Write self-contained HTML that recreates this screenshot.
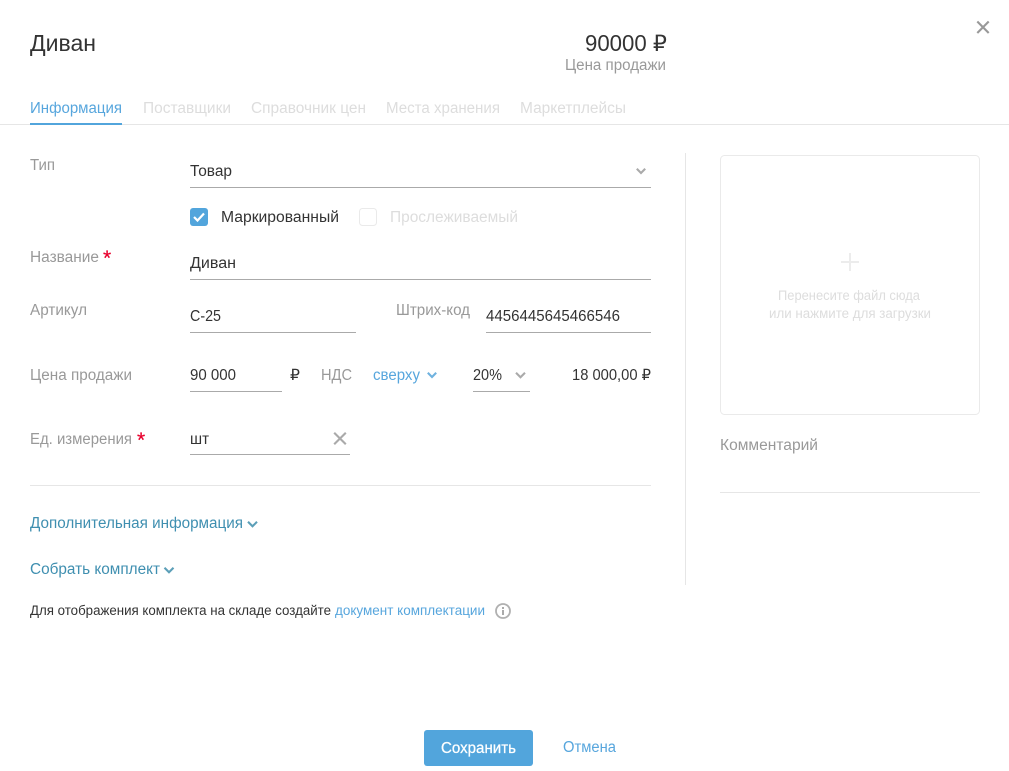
<!DOCTYPE html>
<html lang="ru"><head><meta charset="utf-8"><title>Диван</title>
<style>
html,body{margin:0;padding:0;background:#fff;width:1009px;height:771px;overflow:hidden}
svg{display:block}
text{font-family:"Liberation Sans",sans-serif;font-size:15.5px;fill:#333;white-space:pre}
.g{fill:#999}.d{fill:#ddd}.b{fill:#57a6dd}.t{fill:#3f8fb0}
.c{fill:none;stroke-linecap:butt;stroke-linejoin:miter}
.a{font-size:21px;fill:#e8002d;stroke:#e8002d;stroke-width:.2px}
.s{font-size:13.4px}
.h{font-size:22.7px}
</style></head><body>
<svg width="1009" height="771" viewBox="0 0 1009 771" xmlns="http://www.w3.org/2000/svg">
<rect width="1009" height="771" fill="#fff"/>
<text x="30" y="51" class="h" textLength="66" lengthAdjust="spacingAndGlyphs">Диван</text>
<text x="585" y="51" class="h" textLength="82" lengthAdjust="spacingAndGlyphs">90000 ₽</text>
<text x="565" y="70" class="g" textLength="101" lengthAdjust="spacingAndGlyphs">Цена продажи</text>
<path d="M977.300 21.500L988.700 33M988.700 21.500L977.300 33" stroke="#999" stroke-width="2.100" class="c"/>

<text x="30" y="113" class="b" textLength="92" lengthAdjust="spacingAndGlyphs">Информация</text>
<text x="143" y="113" class="d" textLength="88" lengthAdjust="spacingAndGlyphs">Поставщики</text>
<text x="251" y="113" class="d" textLength="115" lengthAdjust="spacingAndGlyphs">Справочник цен</text>
<text x="386" y="113" class="d" textLength="114" lengthAdjust="spacingAndGlyphs">Места хранения</text>
<text x="520" y="113" class="d" textLength="106" lengthAdjust="spacingAndGlyphs">Маркетплейсы</text>
<rect x="0" y="124" width="1009" height="1" fill="#e6e6e6"/>
<rect x="30" y="123" width="92" height="2" fill="#52a5dc"/>

<text x="30" y="170" class="g" textLength="25" lengthAdjust="spacingAndGlyphs">Тип</text>
<text x="190" y="176" textLength="42" lengthAdjust="spacingAndGlyphs">Товар</text>
<path d="M636.800 168.800l4.200 4.200 4.200-4.200" stroke="#aaa" stroke-width="2.100" class="c"/>
<rect x="190" y="187" width="461" height="1" fill="#aaa"/>

<rect x="190" y="208" width="18" height="18" rx="3" fill="#52a5dc"/>
<path d="M194 217l3.500 3.500 6.500-7" stroke="#fff" stroke-width="2.200" class="c"/>
<text x="221" y="222" textLength="118" lengthAdjust="spacingAndGlyphs">Маркированный</text>
<rect x="359.500" y="208.500" width="17" height="17" rx="3" fill="#fff" stroke="#eaeaea"/>
<text x="390" y="222" class="d" textLength="128" lengthAdjust="spacingAndGlyphs">Прослеживаемый</text>

<text x="30" y="262" class="g" textLength="69" lengthAdjust="spacingAndGlyphs">Название</text>
<text x="103" y="265" class="a">*</text>
<text x="190" y="268" textLength="46" lengthAdjust="spacingAndGlyphs">Диван</text>
<rect x="190" y="279" width="461" height="1" fill="#aaa"/>

<text x="30" y="315" class="g" textLength="57" lengthAdjust="spacingAndGlyphs">Артикул</text>
<text x="190" y="321" textLength="31" lengthAdjust="spacingAndGlyphs">С-25</text>
<rect x="190" y="332" width="166" height="1" fill="#aaa"/>
<text x="396" y="315" class="g" textLength="74" lengthAdjust="spacingAndGlyphs">Штрих-код</text>
<text x="486" y="321" textLength="134" lengthAdjust="spacingAndGlyphs">4456445645466546</text>
<rect x="486" y="332" width="165" height="1" fill="#aaa"/>

<text x="30" y="380" class="g" textLength="102" lengthAdjust="spacingAndGlyphs">Цена продажи</text>
<text x="190" y="380" textLength="46" lengthAdjust="spacingAndGlyphs">90 000</text>
<rect x="190" y="391" width="92" height="1" fill="#aaa"/>
<text x="290" y="380" textLength="10" lengthAdjust="spacingAndGlyphs">₽</text>
<text x="321" y="380" class="g" textLength="31" lengthAdjust="spacingAndGlyphs">НДС</text>
<text x="373" y="380" class="b" textLength="47" lengthAdjust="spacingAndGlyphs">сверху</text>
<path d="M427.800 372.800l4.200 4.200 4.200-4.200" stroke="#6fb2df" stroke-width="2.100" class="c"/>
<text x="473" y="380" textLength="29" lengthAdjust="spacingAndGlyphs">20%</text>
<path d="M516 372.800l4.500 4.500 4.500-4.500" stroke="#aaa" stroke-width="2.100" class="c"/>
<rect x="473" y="391" width="57" height="1" fill="#aaa"/>
<text x="572" y="380" textLength="79" lengthAdjust="spacingAndGlyphs">18 000,00 ₽</text>

<text x="30" y="444" class="g" textLength="102" lengthAdjust="spacingAndGlyphs">Ед. измерения</text>
<text x="137" y="447" class="a">*</text>
<text x="190" y="444" textLength="19" lengthAdjust="spacingAndGlyphs">шт</text>
<path d="M334.200 432.700L345.800 444.300M345.800 432.700L334.200 444.300" stroke="#aaa" stroke-width="2.100" class="c"/>
<rect x="190" y="454" width="160" height="1" fill="#aaa"/>

<rect x="30" y="485" width="621" height="1" fill="#e6e6e6"/>
<rect x="685" y="153" width="1" height="432" fill="#e6e6e6"/>

<text x="30" y="528" class="t" textLength="213" lengthAdjust="spacingAndGlyphs">Дополнительная информация</text>
<path d="M248 521.800l4.500 4.500 4.500-4.500" stroke="#5c9fb8" stroke-width="2.100" class="c"/>
<text x="30" y="574" class="t" textLength="130" lengthAdjust="spacingAndGlyphs">Собрать комплект</text>
<path d="M164.500 567.800l4.500 4.500 4.500-4.500" stroke="#5c9fb8" stroke-width="2.100" class="c"/>

<text x="30" y="615" class="s" textLength="301" lengthAdjust="spacingAndGlyphs">Для отображения комплекта на складе создайте</text>
<text x="335" y="615" class="b s" textLength="150" lengthAdjust="spacingAndGlyphs">документ комплектации</text>
<circle cx="503" cy="611" r="7" fill="none" stroke="#b0b0b0" stroke-width="1.800"/>
<rect x="502" y="610" width="2" height="5" fill="#aaa"/>
<rect x="502" y="607" width="2" height="2" fill="#aaa"/>

<rect x="720.500" y="155.500" width="259" height="259" rx="4" fill="#fff" stroke="#eaeaea"/>
<path d="M850 253v18M841 262h18" stroke="#ececec" stroke-width="2" class="c"/>
<text x="778" y="300" class="d s" textLength="142" lengthAdjust="spacingAndGlyphs">Перенесите файл сюда</text>
<text x="769" y="318" class="d s" textLength="162" lengthAdjust="spacingAndGlyphs">или нажмите для загрузки</text>
<text x="720" y="450" class="g" textLength="98" lengthAdjust="spacingAndGlyphs">Комментарий</text>
<rect x="720" y="492" width="260" height="1" fill="#e6e6e6"/>

<rect x="424" y="730" width="109" height="36" rx="3" fill="#52a5dc"/>
<text x="441" y="753" style="fill:#fff;stroke:#fff;stroke-width:.25px" textLength="75" lengthAdjust="spacingAndGlyphs">Сохранить</text>
<text x="563" y="752" class="b" textLength="53" lengthAdjust="spacingAndGlyphs">Отмена</text>
</svg>
</body></html>
